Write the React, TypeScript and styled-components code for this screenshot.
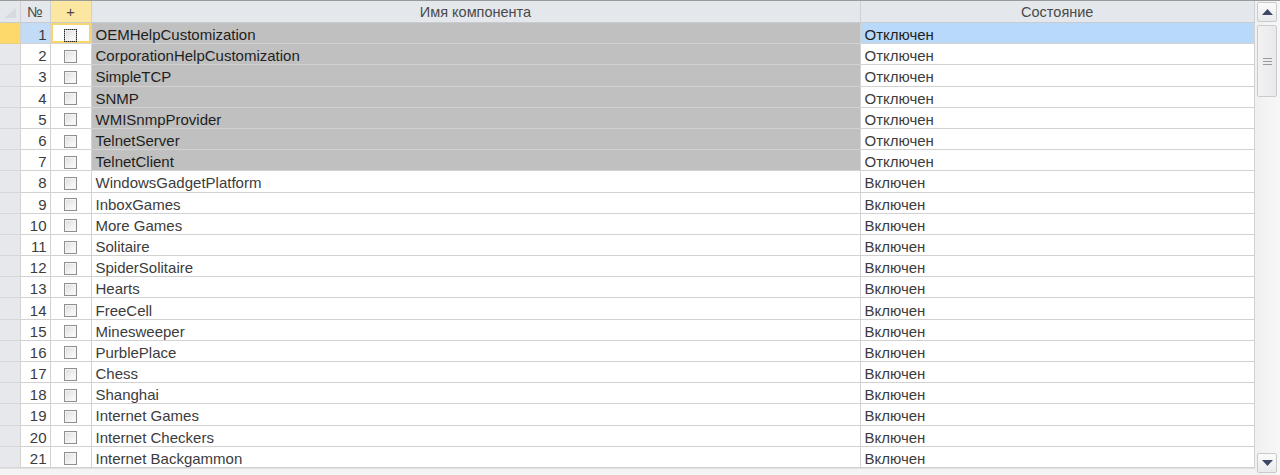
import styled, { createGlobalStyle, css } from "styled-components";

const GlobalStyle = createGlobalStyle`
  html, body {
    margin: 0;
    padding: 0;
    background: #f4f4f4;
    overflow: hidden;
  }
  body {
    font-family: "Liberation Sans", Arial, sans-serif;
  }
`;

interface Row {
  name: string;
  enabled: boolean;
}

const rows: Row[] = [
  { name: "OEMHelpCustomization", enabled: false },
  { name: "CorporationHelpCustomization", enabled: false },
  { name: "SimpleTCP", enabled: false },
  { name: "SNMP", enabled: false },
  { name: "WMISnmpProvider", enabled: false },
  { name: "TelnetServer", enabled: false },
  { name: "TelnetClient", enabled: false },
  { name: "WindowsGadgetPlatform", enabled: true },
  { name: "InboxGames", enabled: true },
  { name: "More Games", enabled: true },
  { name: "Solitaire", enabled: true },
  { name: "SpiderSolitaire", enabled: true },
  { name: "Hearts", enabled: true },
  { name: "FreeCell", enabled: true },
  { name: "Minesweeper", enabled: true },
  { name: "PurblePlace", enabled: true },
  { name: "Chess", enabled: true },
  { name: "Shanghai", enabled: true },
  { name: "Internet Games", enabled: true },
  { name: "Internet Checkers", enabled: true },
  { name: "Internet Backgammon", enabled: true },
];

const Window = styled.div`
  display: flex;
  width: 1280px;
  height: 475px;
  border-top: 1px solid #9a9a9a;
  box-sizing: border-box;
  background: #f4f4f4;
  font-size: 15px;
  color: #3c3c3c;
`;

const GridArea = styled.div`
  flex: 1;
  display: flex;
  flex-direction: column;
`;

const Table = styled.table`
  width: 1255px;
  table-layout: fixed;
  border-collapse: collapse;
  background: #fff;
`;

const HeadCell = styled.th<{ $active?: boolean }>`
  height: 21px;
  padding: 0;
  font-weight: normal;
  font-size: 14.5px;
  color: #4a4a4a;
  text-align: center;
  background: ${(p) => (p.$active ? "#fbe6a2" : "#e4e7eb")};
  border-right: 1px solid #cdd0d4;
  border-bottom: 1px solid #c8cbcf;
  white-space: nowrap;
`;

const IndicatorHead = styled(HeadCell)`
  position: relative;
  svg {
    position: absolute;
    left: 4px;
    bottom: 4px;
  }
`;

const BodyRow = styled.tr`
  height: 21.2px;
`;

const Cell = styled.td<{ $bg?: string; $align?: string; $dark?: boolean }>`
  padding: 3px 4px 0;
  height: 20.2px;
  box-sizing: border-box;
  background: ${(p) => p.$bg || "#fff"};
  text-align: ${(p) => p.$align || "left"};
  color: ${(p) => (p.$dark ? "#1e1e1e" : "#3c3c3c")};
  border-right: 1px solid #d2d2d2;
  border-bottom: 1px solid #d2d2d2;
  white-space: nowrap;
  overflow: hidden;
  line-height: 17px;
`;

const IndicatorCell = styled.td<{ $current?: boolean }>`
  padding: 0;
  background: ${(p) => (p.$current ? "#fdd96b" : "#e6e8eb")};
  border-right: 1px solid #d2d2d2;
  border-bottom: 1px solid ${(p) => (p.$current ? "#e9d08a" : "#d6d8db")};
`;

const NumCell = styled(Cell)`
  padding-right: 3px;
`;

const CheckCell = styled.td<{ $focused?: boolean }>`
  padding: 1px 0 0;
  text-align: center;
  background: #fff;
  border-right: 1px solid #d2d2d2;
  border-bottom: 1px solid #d2d2d2;
  ${(p) =>
    p.$focused &&
    css`
      box-shadow: inset 0 0 0 2px #f7d66d;
    `}
`;

const Check = styled.span<{ $focused?: boolean }>`
  display: inline-block;
  width: 11px;
  height: 11px;
  vertical-align: middle;
  border: 1px solid #8e8f8f;
  background: linear-gradient(135deg, #dcdcdc 0%, #f2f2f2 60%, #fdfdfd 100%);
  box-shadow: inset 0 0 0 1px #f4f4f4;
  ${(p) =>
    p.$focused &&
    css`
      outline: 1px dotted #222;
      outline-offset: -1px;
    `}
`;

const BottomStrip = styled.div`
  flex: 1;
  background: #f4f4f4;
  border-top: 1px solid #e0e0e0;
`;

const ScrollBar = styled.div`
  width: 25px;
  display: flex;
  flex-direction: column;
  padding: 1px 3px 2px 2px;
  box-sizing: border-box;
  background: linear-gradient(90deg, #f0f0f0, #f7f7f7);
  gap: 3px;
`;

const ScrollButton = styled.div`
  height: 18px;
  border: 1px solid #c9cacc;
  border-radius: 2px;
  background: linear-gradient(180deg, #fbfbfb, #e9eaec);
  display: flex;
  align-items: center;
  justify-content: center;
`;

const Track = styled.div`
  flex: 1;
  display: flex;
  flex-direction: column;
`;

const Thumb = styled.div`
  height: 70px;
  border: 1px solid #cacbcd;
  border-radius: 2px;
  background: linear-gradient(90deg, #f2f2f3, #e8e9eb);
  display: flex;
  align-items: center;
  justify-content: center;
`;

const Grip = styled.div`
  width: 9px;
  height: 7px;
  border-top: 1px solid #9a9a9a;
  border-bottom: 1px solid #9a9a9a;
  box-sizing: border-box;
  position: relative;
  &::after {
    content: "";
    position: absolute;
    left: 0;
    right: 0;
    top: 2px;
    border-top: 1px solid #9a9a9a;
  }
`;

const Arrow = ({ down }: { down?: boolean }) => (
  <svg width="11" height="6" viewBox="0 0 11 6">
    <path d={down ? "M0 0 H11 L5.5 6 Z" : "M0 6 H11 L5.5 0 Z"} fill="#3c4866" />
  </svg>
);

function App() {
  return (
    <>
      <GlobalStyle />
      <Window>
        <GridArea>
          <Table>
            <colgroup>
              <col style={{ width: 20 }} />
              <col style={{ width: 30 }} />
              <col style={{ width: 41 }} />
              <col style={{ width: 769 }} />
              <col />
            </colgroup>
            <thead>
              <tr>
                <IndicatorHead>
                  <svg width="12" height="10" viewBox="0 0 12 10">
                    <path d="M0 10 L12 0 V10 Z" fill="#d7dade" />
                  </svg>
                </IndicatorHead>
                <HeadCell>№</HeadCell>
                <HeadCell $active>+</HeadCell>
                <HeadCell>Имя компонента</HeadCell>
                <HeadCell>Состояние</HeadCell>
              </tr>
            </thead>
            <tbody>
              {rows.map((r, i) => {
                const current = i === 0;
                return (
                  <BodyRow key={r.name}>
                    <IndicatorCell $current={current} />
                    <NumCell $align="right" $bg={current ? "#c2dcf8" : "#fff"}>
                      {i + 1}
                    </NumCell>
                    <CheckCell $focused={current}>
                      <Check $focused={current} />
                    </CheckCell>
                    <Cell $bg={r.enabled ? "#fff" : "#c0c0c0"} $dark={!r.enabled}>
                      {r.name}
                    </Cell>
                    <Cell $bg={current ? "#b9d9fa" : "#fff"} $dark={current}>
                      {r.enabled ? "Включен" : "Отключен"}
                    </Cell>
                  </BodyRow>
                );
              })}
            </tbody>
          </Table>
          <BottomStrip />
        </GridArea>
        <ScrollBar>
          <ScrollButton>
            <Arrow />
          </ScrollButton>
          <Track>
            <Thumb>
              <Grip />
            </Thumb>
          </Track>
          <ScrollButton>
            <Arrow down />
          </ScrollButton>
        </ScrollBar>
      </Window>
    </>
  );
}

export default App;
